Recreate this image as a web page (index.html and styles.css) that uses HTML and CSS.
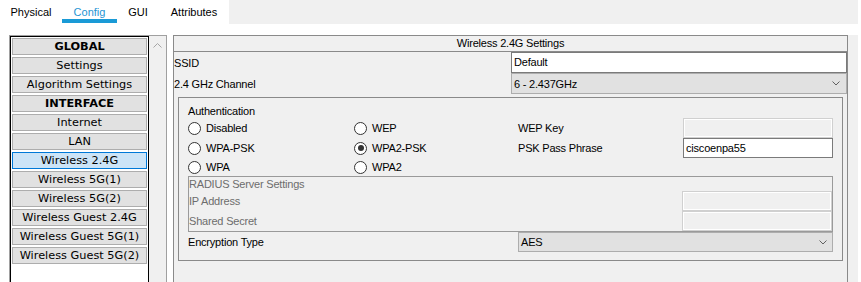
FILE: index.html
```html
<!DOCTYPE html>
<html lang="en">
<head>
    <meta charset="UTF-8">
    <title>Wireless 2.4G Settings</title>
    <link rel="stylesheet" href="styles.css">
</head>
<body>
    <div class="tabs">
        <div class="tab tab-physical">Physical</div>
        <div class="tab tab-config active">Config</div>
        <div class="tab tab-gui">GUI</div>
        <div class="tab tab-attr">Attributes</div>
        <div class="tab-fill"></div>
    </div>

    <div class="main">
        <!-- left navigation -->
        <div class="sidebar">
            <div class="nav">
                <div class="nav-item head">GLOBAL</div>
                <div class="nav-item">Settings</div>
                <div class="nav-item">Algorithm Settings</div>
                <div class="nav-item head">INTERFACE</div>
                <div class="nav-item">Internet</div>
                <div class="nav-item">LAN</div>
                <div class="nav-item selected">Wireless 2.4G</div>
                <div class="nav-item">Wireless 5G(1)</div>
                <div class="nav-item">Wireless 5G(2)</div>
                <div class="nav-item">Wireless Guest 2.4G</div>
                <div class="nav-item">Wireless Guest 5G(1)</div>
                <div class="nav-item">Wireless Guest 5G(2)</div>
            </div>
            <div class="scrollbar">
                <svg width="9" height="6" viewBox="0 0 9 6"><polyline points="0.5,5.5 4.5,1.5 8.5,5.5" fill="none" stroke="#a6a6a6"/></svg>
            </div>
        </div>

        <!-- settings panel -->
        <div class="panel-wrap">
            <div class="panel">
                <div class="panel-title">Wireless 2.4G Settings</div>

                <div class="field-row">
                    <span>SSID</span>
                    <div class="textbox">Default</div>
                </div>
                <div class="field-row">
                    <span>2.4 GHz Channel</span>
                    <div class="select">
                        <span>6 - 2.437GHz</span>
                        <svg width="8" height="5" viewBox="0 0 8 5"><polyline points="0.5,0.5 4,4 7.5,0.5" fill="none" stroke="#606060"/></svg>
                    </div>
                </div>

                <div class="auth">
                    <div class="auth-title">Authentication</div>
                    <div class="auth-grid">
                        <div class="radio"><span class="dot"></span>Disabled</div>
                        <div class="radio"><span class="dot"></span>WEP</div>
                        <span>WEP Key</span>
                        <div class="textbox small disabled"></div>

                        <div class="radio"><span class="dot"></span>WPA-PSK</div>
                        <div class="radio"><span class="dot checked"></span>WPA2-PSK</div>
                        <span>PSK Pass Phrase</span>
                        <div class="textbox small">ciscoenpa55</div>

                        <div class="radio"><span class="dot"></span>WPA</div>
                        <div class="radio"><span class="dot"></span>WPA2</div>
                    </div>

                    <div class="radius">
                        <div class="radius-title">RADIUS Server Settings</div>
                        <div class="radius-row">
                            <span>IP Address</span>
                            <div class="textbox small disabled"></div>
                        </div>
                        <div class="radius-row">
                            <span>Shared Secret</span>
                            <div class="textbox small disabled"></div>
                        </div>
                    </div>

                    <div class="auth-grid enc-row">
                        <span class="enc-label">Encryption Type</span>
                        <div class="select enc-select">
                            <span>AES</span>
                            <svg width="8" height="5" viewBox="0 0 8 5"><polyline points="0.5,0.5 4,4 7.5,0.5" fill="none" stroke="#606060"/></svg>
                        </div>
                    </div>
                </div>
            </div>
        </div>
    </div>
</body>
</html>
```

FILE: styles.css
```css
html, body {
    margin: 0;
    height: 100%;
    overflow: hidden;
    background: #fff;
}

body {
    font-family: "Liberation Sans", Arial, sans-serif;
    font-size: 11px;
    color: #000;
}

/* top tabs */
.tabs {
    display: flex;
    height: 24px;
}

.tab {
    height: 23px;
    box-sizing: border-box;
    padding-top: 5px;
    line-height: 14px;
    text-align: center;
    border-bottom: 4px solid transparent;
}

.tab-physical { width: 62px; }
.tab-config { width: 55px; }
.tab-gui { width: 42px; }
.tab-attr { width: 70px; }

.tab.active {
    color: #1f95d3;
    border-bottom-color: #1a9ad6;
}

.tab-fill {
    width: 629px;
    background: #f0f0f0;
}

/* layout below tabs */
.main {
    display: flex;
    gap: 6px;
    padding: 11px 0 0 9px;
    height: 258px;
    box-sizing: border-box;
}

.sidebar {
    display: flex;
    width: 158px;
    box-sizing: border-box;
    border: 1px solid #a0a0a0;
    border-bottom: none;
    background: #f0f0f0;
}

.nav {
    width: 139px;
    box-sizing: border-box;
    border: 1px solid #000;
    border-bottom: none;
    background: #fff;
    padding-top: 1px;
}

.nav-item {
    height: 17px;
    margin: 0 1px 2px;
    box-sizing: border-box;
    border: 1px solid #adadad;
    background: #e1e1e1;
    font-family: "DejaVu Sans", Verdana, sans-serif;
    font-size: 11.3px;
    line-height: 16px;
    text-align: center;
    white-space: nowrap;
    overflow: hidden;
}

.nav-item.head {
    font-weight: bold;
}

.nav-item.selected {
    background: #cce4f7;
    border-color: #0078d7;
}

.scrollbar {
    flex: 1;
    display: flex;
    justify-content: center;
    align-items: flex-start;
    padding-top: 6px;
}

/* settings panel */
.panel-wrap {
    width: 685px;
    background: #f0f0f0;
    letter-spacing: -0.2px;
}

.panel {
    width: 675px;
    height: 100%;
    box-sizing: border-box;
    border: 1px solid #8a8a8a;
    border-bottom: none;
}

.panel-title {
    height: 16px;
    box-sizing: border-box;
    border-bottom: 1px solid #8a8a8a;
    line-height: 15px;
    text-align: center;
}

.field-row {
    display: grid;
    grid-template-columns: 337px 336px;
    height: 21px;
    align-items: center;
}

.textbox {
    height: 21px;
    box-sizing: border-box;
    border: 1px solid #7a7a7a;
    background: #fff;
    padding: 0 2px;
    line-height: 19px;
}

.textbox.small {
    height: 20px;
    line-height: 18px;
}

.textbox.disabled {
    background: #f0f0f0;
    border-color: #d0d0d0;
    box-shadow: inset 0 0 0 1px #fff;
}

.select {
    height: 21px;
    box-sizing: border-box;
    display: flex;
    align-items: center;
    justify-content: space-between;
    border: 1px solid #adadad;
    background: #e1e1e1;
    padding: 0 6px 0 2px;
}

.auth {
    margin: 3px 4px 0;
    border: 1px solid #8a8a8a;
    padding: 0 9px 8px;
}

.auth-title {
    height: 20px;
    box-sizing: border-box;
    padding-top: 6px;
    line-height: 14px;
}

.auth-grid {
    display: grid;
    grid-template-columns: 166px 164px 165px 150px;
    grid-template-rows: 20px 20px 18px;
    align-items: center;
}

.radio {
    display: flex;
    align-items: center;
    gap: 5px;
}

.dot {
    width: 13px;
    height: 13px;
    box-sizing: border-box;
    border: 1px solid #333;
    border-radius: 50%;
    background: #fff;
    display: flex;
    align-items: center;
    justify-content: center;
}

.dot.checked::after {
    content: "";
    width: 6px;
    height: 6px;
    border-radius: 50%;
    background: #333;
}

.radius {
    border: 1px solid #9a9a9a;
    color: #6d6d6d;
}

.radius-title {
    height: 14px;
    line-height: 14px;
}

.radius-row {
    display: grid;
    grid-template-columns: 1fr 150px;
    height: 20px;
    align-items: center;
}

.enc-row {
    grid-template-rows: 20px;
}

.enc-label {
    grid-column: 1 / 3;
}

.enc-select {
    grid-column: 3 / 5;
    height: 20px;
    padding-right: 5px;
}
```
